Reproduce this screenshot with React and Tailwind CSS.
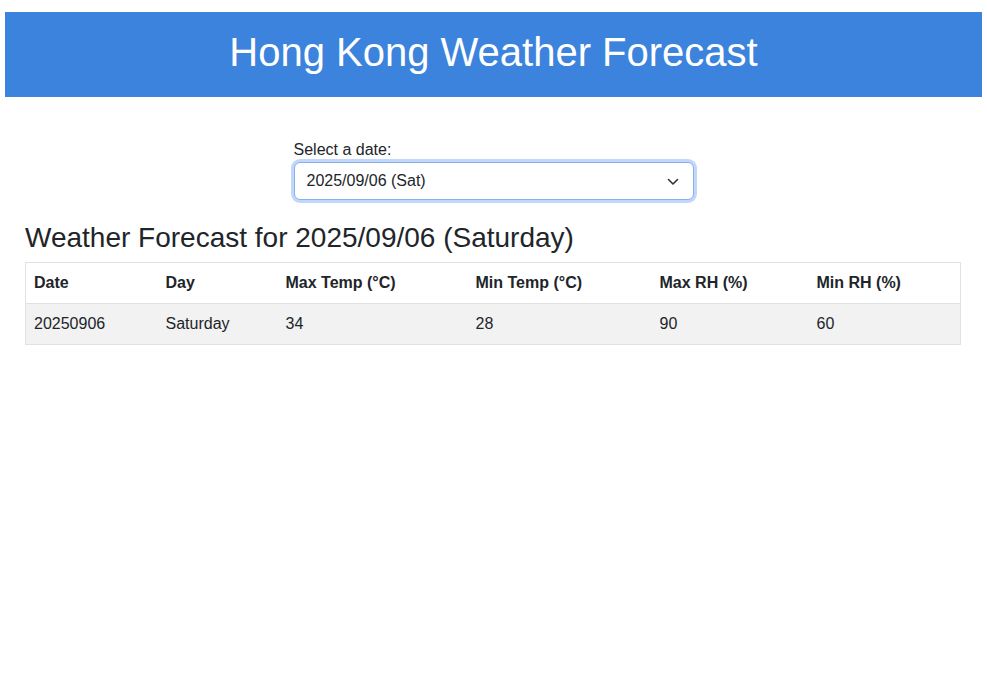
export default function App() {
  const cols = [
    ["Date", "w-[132px]"],
    ["Day", "w-[120px]"],
    ["Max Temp (°C)", "w-[190px]"],
    ["Min Temp (°C)", "w-[184px]"],
    ["Max RH (%)", "w-[157px]"],
    ["Min RH (%)", "w-[152px]"],
  ];
  const row = ["20250906", "Saturday", "34", "28", "90", "60"];
  return (
    <div className="min-h-[691px] bg-white pt-[12px] px-[5px] text-[#212529]" style={{ fontFamily: '"Liberation Sans", Arial, sans-serif' }}>
      <header className="h-[85px] bg-[#3b83dc] flex items-center justify-center pb-[5px]">
        <h1 className="text-[40px] text-white leading-none">Hong Kong Weather Forecast</h1>
      </header>
      <div className="px-[20px]">
        <div className="flex justify-center mt-[43px]">
          <div className="w-[400px] flex flex-col">
            <label className="text-[16px] leading-[20px] mb-[2px]">Select a date:</label>
            <div className="relative h-[38px] rounded-[6px] border border-[#86b0f0] ring-[3px] ring-[#c3d7fb] flex items-center pl-[12px] bg-white">
              <span className="text-[16px]">2025/09/06 (Sat)</span>
              <svg className="absolute right-[14px] top-[14px]" width="12" height="9" viewBox="0 0 12 9" fill="none">
                <path d="M1.5 2.5 L6 7 L10.5 2.5" stroke="#333" strokeWidth="1.6" strokeLinecap="round" strokeLinejoin="round" />
              </svg>
            </div>
          </div>
        </div>
        <h2 className="text-[28px] leading-none mt-[24px]">Weather Forecast for 2025/09/06 (Saturday)</h2>
        <table className="mt-[10px] w-[935px] table-fixed border-collapse border border-[#dee2e6] text-[16px]">
          <thead>
            <tr className="h-[41px]">
              {cols.map(([c, w]) => (
                <th key={c} className={`${w} text-left font-bold px-[8px] border-b border-[#dee2e6]`}>{c}</th>
              ))}
            </tr>
          </thead>
          <tbody>
            <tr className="h-[41px] bg-[#f2f2f2]">
              {row.map((v, i) => (
                <td key={i} className="px-[8px]">{v}</td>
              ))}
            </tr>
          </tbody>
        </table>
      </div>
    </div>
  );
}
